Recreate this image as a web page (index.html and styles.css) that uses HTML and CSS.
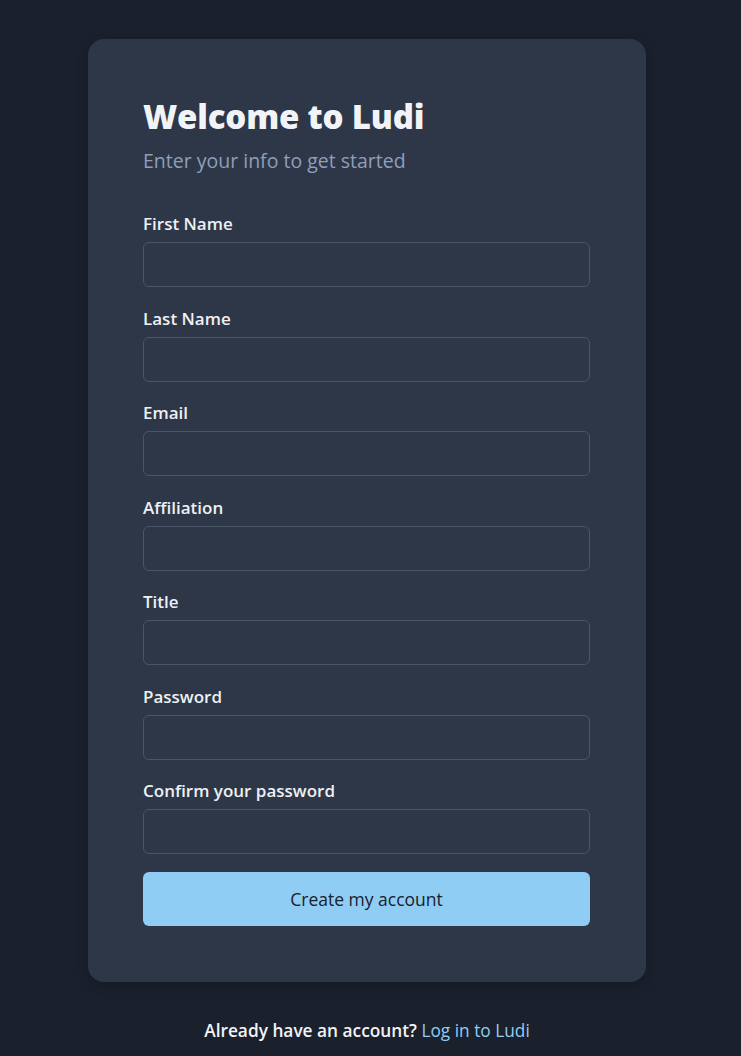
FILE: index.html
```html
<!DOCTYPE html>
<html lang="en">
<head>
<meta charset="utf-8">
<title>Welcome to Ludi</title>
<link rel="stylesheet" href="styles.css">
</head>
<body>
<main class="page">
  <section class="card">
    <h1 class="title">Welcome to Ludi</h1>
    <p class="subtitle">Enter your info to get started</p>
    <form class="form">
      <label class="field"><span class="label">First Name</span><input class="input" type="text"></label>
      <label class="field"><span class="label">Last Name</span><input class="input" type="text"></label>
      <label class="field"><span class="label">Email</span><input class="input" type="email"></label>
      <label class="field"><span class="label">Affiliation</span><input class="input" type="text"></label>
      <label class="field"><span class="label">Title</span><input class="input" type="text"></label>
      <label class="field"><span class="label">Password</span><input class="input" type="password"></label>
      <label class="field"><span class="label">Confirm your password</span><input class="input" type="password"></label>
      <button class="submit" type="button">Create my account</button>
    </form>
  </section>
  <p class="footer">Already have an account? <a class="link" href="#">Log in to Ludi</a></p>
</main>
</body>
</html>
```

FILE: styles.css
```css
* { box-sizing: border-box; }
html, body { margin: 0; padding: 0; }
body {
  background: #1a202c;
  font-family: "Open Sans", "Noto Sans", sans-serif;
  color: #edf0f5;
  min-height: 1056px;
}
.page {
  display: flex;
  flex-direction: column;
  align-items: center;
  padding-top: 39px;
  padding-right: 7px;
}
.card {
  width: 558px;
  background: #2d3748;
  border-radius: 16px;
  padding: 56px 56px 56px 55px;
  box-shadow: 0 4px 12px rgba(0,0,0,0.15);
}
.title {
  margin: 0;
  font-size: 33px;
  font-weight: 800;
  line-height: 44px;
  color: #f2f3f7;
  letter-spacing: -0.2px;
}
.subtitle {
  margin: 8px 0 0;
  font-size: 19.5px;
  font-weight: 500;
  line-height: 28px;
  color: #8d9fbc;
}
.form {
  margin-top: 38px;
  display: flex;
  flex-direction: column;
  gap: 20.5px;
}
.field {
  display: flex;
  flex-direction: column;
  gap: 7px;
}
.label {
  font-size: 17px;
  font-weight: 600;
  line-height: 22px;
  color: #eef0f4;
}
.input {
  height: 45px;
  width: 100%;
  background: transparent;
  border: 1px solid #4a5567;
  border-radius: 6px;
  font: inherit;
  color: #eef0f4;
  padding: 0 16px;
}
.submit {
  margin-top: -2.5px;
  height: 54px;
  width: 100%;
  border: none;
  border-radius: 6px;
  background: #90cdf4;
  color: #1a202c;
  font-family: inherit;
  font-size: 17.5px;
  font-weight: 500;
}
.footer {
  margin: 37px 0 0;
  font-size: 17.3px;
  font-weight: 600;
  line-height: 24px;
  color: #f2f3f7;
}
.link {
  color: #90cdf4;
  text-decoration: none;
  font-weight: 500;
}
```
